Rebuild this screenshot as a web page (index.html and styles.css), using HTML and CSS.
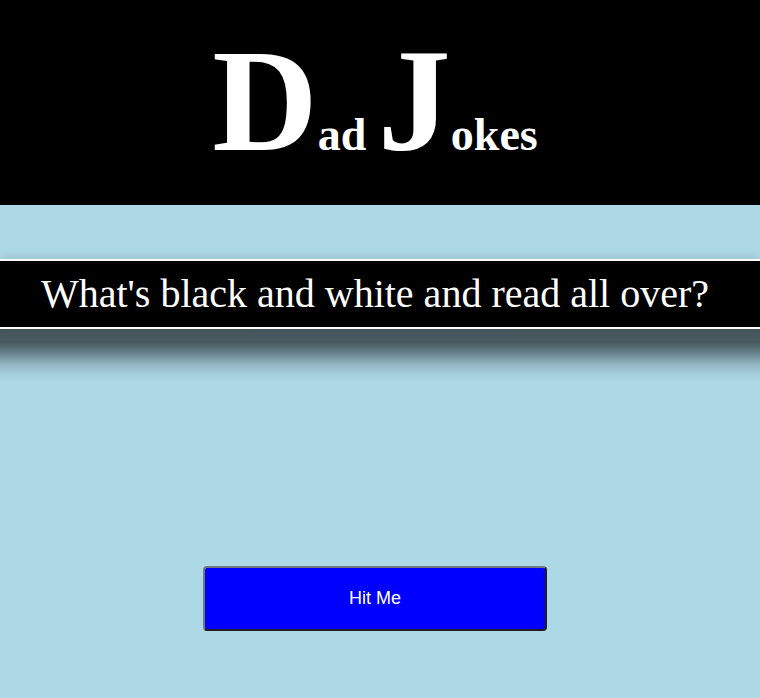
FILE: index.html
```html
<!DOCTYPE html>
<html>
<head>
<meta charset="utf-8">
<title>Dad Jokes</title>
<link rel="stylesheet" href="styles.css">
</head>
<body>
<header class="header">
  <h1 class="title"><span class="big">D</span><span class="small">ad</span> <span class="big">J</span><span class="small">okes</span></h1>
</header>
<main class="main">
  <div class="joke-bar">
    <p class="joke">What's black and white and read all over?</p>
  </div>
  <div class="actions">
    <button class="hit-btn" type="button">Hit Me</button>
  </div>
</main>
</body>
</html>
```

FILE: styles.css
```css
html, body {
  margin: 0;
  padding: 0;
}
body {
  background: #add8e6;
  font-family: "Liberation Serif", "Times New Roman", serif;
  height: 698px;
  overflow: hidden;
}
.header {
  background: #000;
  height: 205px;
  box-sizing: border-box;
  padding-top: 28px;
  padding-right: 10px;
  text-align: center;
}
.title {
  margin: 0;
  color: #fff;
  font-weight: bold;
  line-height: 1;
  font-size: 46px;
}
.big {
  font-size: 146px;
  line-height: 1;
}
.small {
  font-size: 46px;
  line-height: 1;
}
.main {
  padding-top: 54px;
}
.joke-bar {
  position: relative;
  background: #000;
  border-top: 2px solid #fff;
  border-bottom: 2px solid #fff;
  height: 66px;
  padding-right: 10px;
  display: flex;
  align-items: center;
  justify-content: center;
  box-shadow: 0 -2px 10px rgba(0, 0, 0, 0.1);
}
.joke-bar::after {
  content: "";
  position: absolute;
  left: 0;
  right: 0;
  top: 100%;
  margin-top: 2px;
  height: 54px;
  background: linear-gradient(to bottom,
    rgba(0, 0, 0, 0.6) 0,
    rgba(0, 0, 0, 0.58) 14px,
    rgba(0, 0, 0, 0.4) 24px,
    rgba(0, 0, 0, 0.15) 36px,
    rgba(0, 0, 0, 0.04) 46px,
    rgba(0, 0, 0, 0) 54px);
  pointer-events: none;
}
.joke {
  margin: 0;
  color: #fff;
  font-size: 40px;
  line-height: 1;
}
.actions {
  display: flex;
  justify-content: center;
  padding-top: 237px;
  padding-right: 10px;
}
.hit-btn {
  width: 344px;
  height: 65px;
  background: #0000ff;
  color: #fff;
  font-family: "Liberation Sans", Arial, sans-serif;
  font-size: 18px;
  border-width: 2px;
  border-style: solid;
  border-top-color: #6f7b80;
  border-left-color: #6f7b80;
  border-right-color: #1f1f1f;
  border-bottom-color: #1f1f1f;
  border-radius: 4px;
  padding: 0;
  cursor: pointer;
}
```
